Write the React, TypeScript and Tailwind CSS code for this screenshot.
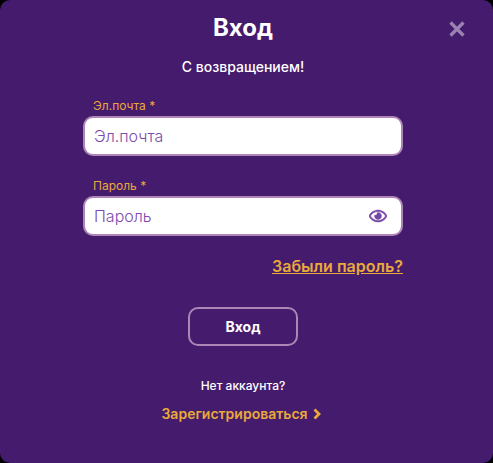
import React from "react";

export default function App() {
  return (
    <div className="w-[493px] h-[463px] bg-black overflow-hidden font-['Inter',sans-serif]">
      <div className="relative w-[493px] h-[463px] bg-[#451b6d] rounded-[10px] pr-[7px] flex flex-col items-center">
        <h1 className="mt-[11px] h-[34px] text-[24px] leading-[34px] font-bold text-white">Вход</h1>
        <button className="absolute left-[447px] top-[19px] w-[20px] h-[20px] flex items-center justify-center">
          <svg width="20" height="20" viewBox="0 0 20 20" fill="none">
            <path d="M3.5 3.5L16.5 16.5M16.5 3.5L3.5 16.5" stroke="#9a83b2" strokeWidth="3.2" />
          </svg>
        </button>
        <p className="mt-[12px] h-[20px] text-[14px] leading-[20px] font-medium text-white">С возвращением!</p>
        <div className="mt-[19px] w-[320px] flex flex-col">
          <label className="pl-[10px] h-[20px] text-[12px] leading-[20px] text-[#e9a93c]">Эл.почта *</label>
          <div className="h-[40px] bg-white rounded-[10px] border-2 border-[#ad86b5] flex items-center pl-[9px] pr-[10px]">
            <span className="text-[16px] font-light text-[#7d4bab]">Эл.почта</span>
          </div>
          <label className="mt-[20px] pl-[10px] h-[20px] text-[12px] leading-[20px] text-[#e9a93c]">Пароль *</label>
          <div className="h-[40px] bg-white rounded-[10px] border-2 border-[#ad86b5] flex items-center justify-between pl-[9px] pr-[10px]">
            <span className="text-[16px] font-light text-[#7d4bab]">Пароль</span>
            <svg width="18" height="16" viewBox="0 0 576 512" fill="#7446a6" stroke="#7446a6" strokeWidth="14" className="mr-[4px]">
              <path d="M288 144a110.9 110.9 0 0 0-31.2 5 55.4 55.4 0 0 1 7.2 27 56 56 0 0 1-56 56 55.4 55.4 0 0 1-27-7.2A111.7 111.7 0 1 0 288 144zm284.5 97.4C518.3 135.6 410.9 64 288 64S57.7 135.6 3.5 241.4a32.4 32.4 0 0 0 0 29.2C57.7 376.4 165.1 448 288 448s230.3-71.6 284.5-177.4a32.4 32.4 0 0 0 0-29.2zM288 400c-98.7 0-189.1-55-237.9-144C98.9 167 189.3 112 288 112s189.1 55 237.9 144C477.1 345 386.7 400 288 400z" />
            </svg>
          </div>
          <a className="mt-[20px] self-end text-[16px] leading-[20px] font-semibold text-[#e9a93c] underline">Забыли пароль?</a>
        </div>
        <button className="mt-[31px] w-[110px] h-[39px] rounded-[10px] border-2 border-[#ad86b5] text-[14px] font-bold text-white">Вход</button>
        <p className="mt-[30px] h-[20px] text-[12px] leading-[20px] font-medium text-white">Нет аккаунта?</p>
        <a className="mt-[8px] mr-[4px] h-[20px] flex items-center gap-[5px] text-[14px] leading-[20px] font-semibold text-[#e9a93c]">
          Зарегистрироваться
          <svg width="8" height="12" viewBox="0 0 8 12" fill="none">
            <path d="M1.5 1.5L6 6L1.5 10.5" stroke="#e9a93c" strokeWidth="2.8" />
          </svg>
        </a>
      </div>
    </div>
  );
}
